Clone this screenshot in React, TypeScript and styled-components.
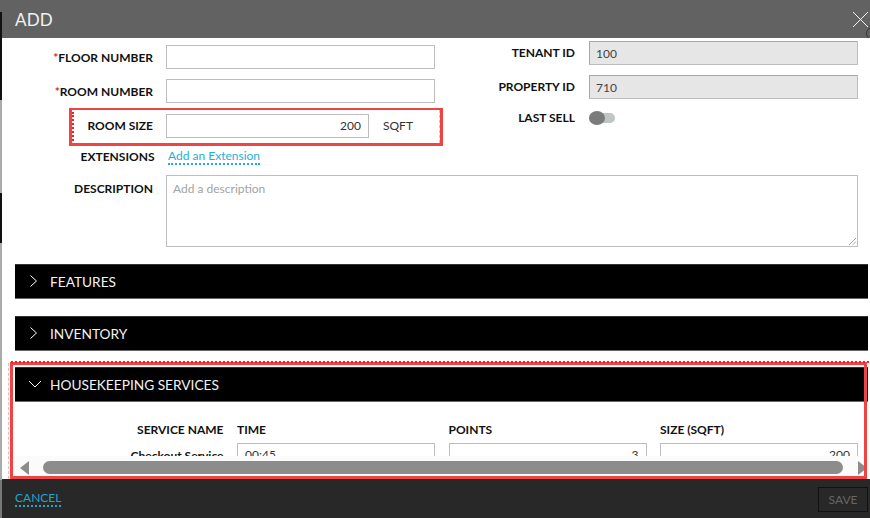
import React from "react";
import styled, { createGlobalStyle } from "styled-components";

const GlobalStyle = createGlobalStyle`
  html, body {
    margin: 0;
    padding: 0;
    background: #fff;
  }
  * {
    box-sizing: border-box;
  }
`;

const Chevron = ({ open }: { open?: boolean }) => (
  <ChevronIcon $open={open} viewBox="0 0 12 12" fill="none" stroke="#fff" strokeWidth="1">
    <path d={open ? "M0 3l6 6 6-6" : "M0.5 0.5l6 5.5-6 5.5"} />
  </ChevronIcon>
);

function App() {
  return (
    <>
      <GlobalStyle />
      <Dialog>
        <LeftEdge />
        <Header>
          <Title>ADD</Title>
          <CloseIcon viewBox="0 0 16 16" stroke="#fff" strokeWidth="1">
            <path d="M0 0l16 16M16 0L0 16" />
          </CloseIcon>
          <CloseShadow />
        </Header>
        <Body>
          <TopForm>
            <FormColumn>
              <Row>
                <Label><Req>*</Req>FLOOR NUMBER</Label>
                <Input $w={269} />
              </Row>
              <Row>
                <Label><Req>*</Req>ROOM NUMBER</Label>
                <Input $w={269} />
              </Row>
              <Row>
                <Label>ROOM SIZE</Label>
                <Input $w={203} $right>200</Input>
                <Unit>SQFT</Unit>
              </Row>
              <ExtensionRow>
                <Label $nudge>EXTENSIONS</Label>
                <ExtLink>Add an Extension</ExtLink>
              </ExtensionRow>
            </FormColumn>
            <SideColumn>
              <SideRow>
                <SideLabel>TENANT ID</SideLabel>
                <ReadOnly>100</ReadOnly>
              </SideRow>
              <SideRow>
                <SideLabel>PROPERTY ID</SideLabel>
                <ReadOnly>710</ReadOnly>
              </SideRow>
              <ToggleRow>
                <SideLabel>LAST SELL</SideLabel>
                <Toggle><Knob /></Toggle>
              </ToggleRow>
            </SideColumn>
          </TopForm>
          <DescriptionRow>
            <Label>DESCRIPTION</Label>
            <TextArea>
              Add a description
              <Grip viewBox="0 0 8 8" stroke="#999" strokeWidth="1">
                <path d="M0 8l8-8M4 8l4-4" />
              </Grip>
            </TextArea>
          </DescriptionRow>
          <Section>
            <Chevron />
            <span>FEATURES</span>
          </Section>
          <Section>
            <Chevron />
            <span>INVENTORY</span>
          </Section>
          <Section $open>
            <Chevron open />
            <span>HOUSEKEEPING SERVICES</span>
          </Section>
          <ServicesTable>
            <NameCell>SERVICE NAME</NameCell>
            <HeadCell>TIME</HeadCell>
            <HeadCell>POINTS</HeadCell>
            <HeadCell>SIZE (SQFT)</HeadCell>
            <ServiceName>Checkout Service</ServiceName>
            <Input $w={198}>00:45</Input>
            <Input $w={198} $right>3</Input>
            <Input $w={198} $right>200</Input>
          </ServicesTable>
          <ScrollBar>
            <LeftArrow />
            <Thumb />
            <RightArrow />
          </ScrollBar>
          <RoomSizeMark />
          <ServicesMark />
        </Body>
        <Footer>
          <CancelLink>CANCEL</CancelLink>
          <SaveButton>SAVE</SaveButton>
        </Footer>
      </Dialog>
    </>
  );
}

export default App;

const Dialog = styled.div`
  position: relative;
  width: 870px;
  height: 518px;
  display: flex;
  flex-direction: column;
  overflow: hidden;
  font-family: "Lato", sans-serif;
  color: #111;
`;

const LeftEdge = styled.div`
  position: absolute;
  left: 0;
  top: 0;
  z-index: 2;
  width: 1.5px;
  height: 518px;
  background: linear-gradient(
    to bottom,
    #626262 0 12px,
    #111 12px 100px,
    #aaa 100px 193px,
    #111 193px 243px,
    #aaa 243px 480px,
    #777 480px
  );
`;

const Header = styled.div`
  position: relative;
  height: 38px;
  flex-shrink: 0;
  background: #626262;
  display: flex;
  align-items: center;
  justify-content: space-between;
  padding: 0 0 0 15px;
  overflow: hidden;
`;

const Title = styled.div`
  color: #f2f2f2;
  font-size: 17px;
  letter-spacing: 0.2px;
`;

const CloseIcon = styled.svg`
  width: 15px;
  height: 15px;
  margin-right: 2px;
`;

const CloseShadow = styled.div`
  position: absolute;
  right: -9px;
  top: 27px;
  width: 13px;
  height: 13px;
  border: 1px solid #333;
  border-radius: 50%;
`;

const Body = styled.div`
  position: relative;
  flex: 1;
  min-height: 0;
  background: #fff;
  overflow: hidden;
  padding-top: 3px;
`;

const TopForm = styled.div`
  display: flex;
`;

const FormColumn = styled.div`
  width: 484px;
  padding-top: 4px;
  display: flex;
  flex-direction: column;
  gap: 10.3px;
`;

const SideColumn = styled.div`
  flex: 1;
  display: flex;
  flex-direction: column;
  gap: 10px;
`;

const Row = styled.div`
  display: flex;
  align-items: center;
  height: 24px;
`;

const ExtensionRow = styled(Row)`
  height: 18px;
`;

const Label = styled.div<{ $nudge?: boolean }>`
  width: 153px;
  margin-right: 13px;
  text-align: right;
  font-size: 12px;
  font-weight: 700;
  ${(p) => (p.$nudge ? "transform: translateX(1.5px);" : "")}
`;

const Req = styled.span`
  color: #d9232e;
`;

const Input = styled.div<{ $w: number; $right?: boolean }>`
  width: ${(p) => p.$w}px;
  height: 24px;
  border: 1px solid #bdbdbd;
  background: #fff;
  font-size: 12px;
  line-height: 22px;
  padding: 0 7px;
  color: #333;
  text-align: ${(p) => (p.$right ? "right" : "left")};
`;

const Unit = styled.div`
  margin-left: 14px;
  font-size: 12px;
  color: #333;
`;

const ExtLink = styled.span`
  margin-left: 2px;
  color: #1fb0d6;
  font-size: 12px;
  border-bottom: 2px dotted #1fb0d6;
  line-height: 15px;
`;

const SideRow = styled.div`
  display: flex;
  align-items: center;
  height: 24px;
`;

const ToggleRow = styled(SideRow)`
  height: 16px;
  margin-top: 1px;
`;

const SideLabel = styled.div`
  width: 91px;
  margin-right: 14px;
  text-align: right;
  font-size: 12px;
  font-weight: 700;
  padding-bottom: 1px;
`;

const ReadOnly = styled.div`
  width: 269px;
  height: 24px;
  background: #e6e6e6;
  border: 1px solid #bdbdbd;
  border-top-color: #a8a8a8;
  border-left-color: #a8a8a8;
  font-size: 12px;
  line-height: 23px;
  padding: 0 6px;
  color: #444;
`;

const Toggle = styled.div`
  position: relative;
  width: 26px;
  height: 10px;
  border-radius: 5px;
  background: #c0c6c6;
`;

const Knob = styled.div`
  position: absolute;
  left: 0;
  top: -2px;
  width: 16px;
  height: 14px;
  border-radius: 50%;
  background: #7b7b7b;
`;

const DescriptionRow = styled.div`
  display: flex;
  align-items: flex-start;
  margin-top: 9px;
  & > ${Label} {
    margin-top: 6px;
  }
`;

const TextArea = styled.div`
  position: relative;
  width: 692px;
  height: 72px;
  border: 1px solid #bdbdbd;
  font-size: 12px;
  line-height: 26px;
  padding: 0 6px;
  color: #a3a3a3;
`;

const Grip = styled.svg`
  position: absolute;
  right: 1px;
  bottom: 1px;
  width: 7px;
  height: 7px;
`;

const Section = styled.div<{ $open?: boolean }>`
  margin: ${(p) => (p.$open ? "16px" : "17px")} 2px 0 15px;
  height: 35px;
  background: #000;
  border-bottom: 1px solid #666;
  border-top: 1px solid #333;
  display: flex;
  align-items: center;
  padding-left: 15px;
  color: #f2f2f2;
  font-size: 13.7px;
`;

const ChevronIcon = styled.svg<{ $open?: boolean }>`
  width: 12px;
  height: 12px;
  margin-left: ${(p) => (p.$open ? "-1.5px" : "0")};
  margin-right: ${(p) => (p.$open ? "9.5px" : "8px")};
`;

const ServicesTable = styled.div`
  display: grid;
  grid-template-columns: 223.5px 198px 198px 198px;
  column-gap: 13.5px;
  row-gap: 6px;
  padding-top: 20px;
  font-size: 12px;
`;

const HeadCell = styled.div`
  font-weight: 700;
  height: 15px;
  line-height: 15px;
`;

const NameCell = styled(HeadCell)`
  text-align: right;
`;

const ServiceName = styled.div`
  text-align: right;
  font-weight: 700;
  line-height: 26px;
`;

const ScrollBar = styled.div`
  position: absolute;
  left: 12px;
  right: 0;
  bottom: 0;
  height: 23px;
  padding-left: 8px;
  background: #fbfbfb;
  display: flex;
  align-items: center;
`;

const LeftArrow = styled.div`
  width: 0;
  height: 0;
  border-style: solid;
  border-width: 7.5px 9px 7.5px 0;
  border-color: transparent #8c8c8c transparent transparent;
`;

const RightArrow = styled.div`
  width: 0;
  height: 0;
  margin-left: 15px;
  border-style: solid;
  border-width: 7.5px 0 7.5px 9px;
  border-color: transparent transparent transparent #8c8c8c;
`;

const Thumb = styled.div`
  margin-left: 14px;
  width: 800px;
  height: 13px;
  border-radius: 7px;
  background: #8c8c8c;
`;

const RoomSizeMark = styled.div`
  position: absolute;
  left: 68.5px;
  top: 70px;
  width: 374.5px;
  height: 38px;
  border: 3px solid #ee4444;
  border-top-width: 2px;
  &::before {
    content: "";
    position: absolute;
    left: 0;
    top: 2px;
    bottom: 2px;
    border-left: 2px dotted #ee2222;
  }
  &::after {
    content: "";
    position: absolute;
    right: 0;
    top: 0;
    bottom: 0;
    border-right: 1px dashed #f7b5b5;
  }
`;

const ServicesMark = styled.div`
  position: absolute;
  left: 9.5px;
  top: 324px;
  width: 857px;
  height: 117px;
  border: 3px solid #ee4444;
  &::before {
    content: "";
    position: absolute;
    left: -2px;
    top: -4px;
    width: 862px;
    border-top: 2px dotted #ee2222;
  }
  &::after {
    content: "";
    position: absolute;
    left: -5px;
    top: -2px;
    bottom: -3px;
    border-left: 1px dashed #f7b5b5;
  }
`;

const Footer = styled.div`
  height: 39px;
  flex-shrink: 0;
  background: #282828;
  display: flex;
  align-items: center;
  justify-content: space-between;
  padding: 0 2px 0 15px;
`;

const CancelLink = styled.span`
  color: #1fa5c8;
  font-size: 12px;
  border-bottom: 2px dotted #1fa5c8;
  line-height: 15px;
`;

const SaveButton = styled.div`
  width: 50px;
  height: 25px;
  margin-top: 2px;
  border: 1px solid #111;
  color: #666;
  font-size: 12px;
  line-height: 24px;
  text-align: center;
`;
